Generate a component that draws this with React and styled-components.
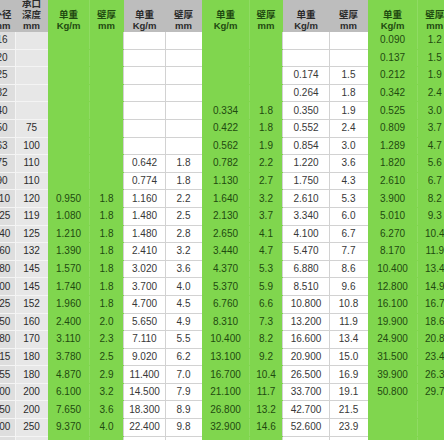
import React from 'react';
import styled, { createGlobalStyle } from 'styled-components';

const GlobalStyle = createGlobalStyle`
  html, body {
    margin: 0;
    padding: 0;
    background: #ffffff;
    overflow: hidden;
  }
`;

const GREEN = '#80d64e';

const Sheet = styled.table`
  margin-left: -12px;
  border-collapse: collapse;
  table-layout: fixed;
  width: 463px;
  font-family: 'Liberation Sans', 'Noto Sans CJK SC', sans-serif;
`;

const headBg = { gray: '#bdbdbd', green: GREEN };
const cellBg = { key: '#dedede', depth: '#e7e7e7', green: GREEN, white: '#ffffff' };
const cellInk = { key: '#2c2c2c', depth: '#2c2c2c', green: '#1f4a10', white: '#383838' };
const rowLine = { key: '#f4f4f4', depth: '#f4f4f4', green: GREEN, white: '#d2d2d2' };

const HeadCell = styled.th`
  padding: 0;
  vertical-align: bottom;
  text-align: center;
  font-size: 9.5px;
  line-height: 11px;
  font-weight: bold;
  background: ${(p) => headBg[p.$tone]};
  color: ${(p) => (p.$tone === 'green' ? '#1f4a10' : '#2a2a2a')};
  border-left: 1px solid
    ${(p) => (p.$split ? 'rgba(255,255,255,0.12)' : 'transparent')};
  white-space: nowrap;
`;

const HeadBox = styled.div`
  height: 32px;
  display: flex;
  flex-direction: column;
  justify-content: flex-end;
  padding-bottom: 1px;
  box-sizing: border-box;
  overflow: hidden;
`;

const Cell = styled.td`
  height: 16.6px;
  padding: 0;
  text-align: center;
  vertical-align: middle;
  font-size: 10px;
  line-height: 12px;
  background: ${(p) => cellBg[p.$tone]};
  color: ${(p) => cellInk[p.$tone]};
  border-bottom: 1px solid ${(p) => rowLine[p.$tone]};
  border-left: 1px solid
    ${(p) =>
      p.$tone === 'white'
        ? '#d2d2d2'
        : p.$split
        ? 'rgba(255,255,255,0.12)'
        : p.$tone === 'depth'
        ? '#f4f4f4'
        : 'transparent'};
  white-space: nowrap;
`;

const widths = [27, 32, 42, 34, 42, 36, 48, 33, 47, 38, 50, 34];
const tones = ['key', 'depth', 'green', 'green', 'white', 'white', 'green', 'green', 'white', 'white', 'green', 'green'];
const splits = [false, false, false, true, false, false, false, true, false, false, false, true];

const heads = [
  ['外径', 'mm'],
  ['承口', '深度', 'mm'],
  ['单重', 'Kg/m'],
  ['壁厚', 'mm'],
  ['单重', 'Kg/m'],
  ['壁厚', 'mm'],
  ['单重', 'Kg/m'],
  ['壁厚', 'mm'],
  ['单重', 'Kg/m'],
  ['壁厚', 'mm'],
  ['单重', 'Kg/m'],
  ['壁厚', 'mm'],
];

const rows = [
  ['16', '', '', '', '', '', '', '', '', '', '0.090', '1.2'],
  ['20', '', '', '', '', '', '', '', '', '', '0.137', '1.5'],
  ['25', '', '', '', '', '', '', '', '0.174', '1.5', '0.212', '1.9'],
  ['32', '', '', '', '', '', '', '', '0.264', '1.8', '0.342', '2.4'],
  ['40', '', '', '', '', '', '0.334', '1.8', '0.350', '1.9', '0.525', '3.0'],
  ['50', '75', '', '', '', '', '0.422', '1.8', '0.552', '2.4', '0.809', '3.7'],
  ['63', '100', '', '', '', '', '0.562', '1.9', '0.854', '3.0', '1.289', '4.7'],
  ['75', '110', '', '', '0.642', '1.8', '0.782', '2.2', '1.220', '3.6', '1.820', '5.6'],
  ['90', '110', '', '', '0.774', '1.8', '1.130', '2.7', '1.750', '4.3', '2.610', '6.7'],
  ['110', '120', '0.950', '1.8', '1.160', '2.2', '1.640', '3.2', '2.610', '5.3', '3.900', '8.2'],
  ['125', '119', '1.080', '1.8', '1.480', '2.5', '2.130', '3.7', '3.340', '6.0', '5.010', '9.3'],
  ['140', '125', '1.210', '1.8', '1.480', '2.8', '2.650', '4.1', '4.100', '6.7', '6.270', '10.4'],
  ['160', '132', '1.390', '1.8', '2.410', '3.2', '3.440', '4.7', '5.470', '7.7', '8.170', '11.9'],
  ['180', '145', '1.570', '1.8', '3.020', '3.6', '4.370', '5.3', '6.880', '8.6', '10.400', '13.4'],
  ['200', '145', '1.740', '1.8', '3.700', '4.0', '5.370', '5.9', '8.510', '9.6', '12.800', '14.9'],
  ['225', '152', '1.960', '1.8', '4.700', '4.5', '6.760', '6.6', '10.800', '10.8', '16.100', '16.7'],
  ['250', '160', '2.400', '2.0', '5.650', '4.9', '8.310', '7.3', '13.200', '11.9', '19.900', '18.6'],
  ['280', '170', '3.110', '2.3', '7.110', '5.5', '10.400', '8.2', '16.600', '13.4', '24.900', '20.8'],
  ['315', '180', '3.780', '2.5', '9.020', '6.2', '13.100', '9.2', '20.900', '15.0', '31.500', '23.4'],
  ['355', '180', '4.870', '2.9', '11.400', '7.0', '16.700', '10.4', '26.500', '16.9', '39.900', '26.3'],
  ['400', '200', '6.100', '3.2', '14.500', '7.9', '21.100', '11.7', '33.700', '19.1', '50.800', '29.7'],
  ['450', '200', '7.650', '3.6', '18.300', '8.9', '26.800', '13.2', '42.700', '21.5', '', ''],
  ['500', '250', '9.370', '4.0', '22.400', '9.8', '32.900', '14.6', '52.600', '23.9', '', ''],
  ['560', '300', '11.700', '4.5', '28.100', '11.0', '41.300', '16.4', '65.600', '26.7', '', ''],
];

export default function App() {
  return (
    <>
      <GlobalStyle />
      <Sheet>
        <colgroup>
          {widths.map((w, i) => (
            <col key={i} style={{ width: w }} />
          ))}
        </colgroup>
        <thead>
          <tr>
            {heads.map((lines, i) => (
              <HeadCell
                key={i}
                $tone={tones[i] === 'green' ? 'green' : 'gray'}
                $split={splits[i]}
              >
                <HeadBox>
                  {lines.map((line, j) => (
                    <span key={j}>{line}</span>
                  ))}
                </HeadBox>
              </HeadCell>
            ))}
          </tr>
        </thead>
        <tbody>
          {rows.map((row, r) => (
            <tr key={r}>
              {row.map((value, c) => (
                <Cell key={c} $tone={tones[c]} $split={splits[c]}>
                  {value}
                </Cell>
              ))}
            </tr>
          ))}
        </tbody>
      </Sheet>
    </>
  );
}
